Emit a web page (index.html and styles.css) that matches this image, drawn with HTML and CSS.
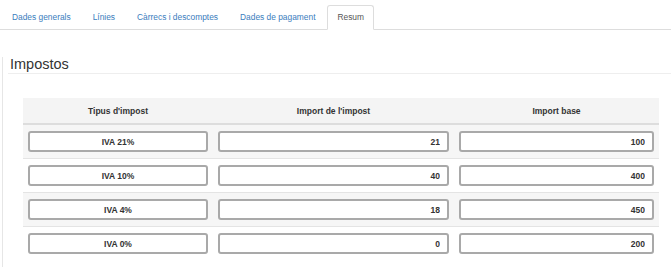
FILE: index.html
```html
<!DOCTYPE html>
<html lang="ca">

<head>
  <meta charset="UTF-8">
  <meta name="viewport" content="width=device-width, initial-scale=1.0">

  <title>Factura - Resum</title>
  <link rel="stylesheet" href="styles.css">
</head>

<body>
  <ul class="tabs">
    <li><a href="#">Dades generals</a></li>
    <li><a href="#">Línies</a></li>
    <li><a href="#">Càrrecs i descomptes</a></li>
    <li><a href="#">Dades de pagament</a></li>
    <li class="active"><a href="#">Resum</a></li>
  </ul>

  <div class="panel">
    <h3 class="section-title">Impostos</h3>

    <table class="taxes">
      <thead>
        <tr>
          <th class="col-type">Tipus d'impost</th>
          <th class="col-amount">Import de l'impost</th>
          <th class="col-base">Import base</th>
        </tr>
      </thead>
      <tbody>
        <tr>
          <td><input class="field center" value="IVA 21%" readonly></td>
          <td><input class="field right" value="21" readonly></td>
          <td><input class="field right" value="100" readonly></td>
        </tr>
        <tr>
          <td><input class="field center" value="IVA 10%" readonly></td>
          <td><input class="field right" value="40" readonly></td>
          <td><input class="field right" value="400" readonly></td>
        </tr>
        <tr>
          <td><input class="field center" value="IVA 4%" readonly></td>
          <td><input class="field right" value="18" readonly></td>
          <td><input class="field right" value="450" readonly></td>
        </tr>
        <tr>
          <td><input class="field center" value="IVA 0%" readonly></td>
          <td><input class="field right" value="0" readonly></td>
          <td><input class="field right" value="200" readonly></td>
        </tr>
      </tbody>
    </table>
  </div>
</body>

</html>
```

FILE: styles.css
```css
body {
  margin: 0;
  font-family: "Liberation Sans", Arial, sans-serif;
  color: #333;
  background: #fff;
}

/* tabs */
.tabs {
  display: flex;
  list-style: none;
  margin: 5px 0 0;
  padding: 0 0 0 2px;
  border-bottom: 1px solid #ddd;
}

.tabs li {
  margin-right: 2px;
  margin-bottom: -1px;
}

.tabs a {
  display: block;
  padding: 6px 9px;
  font-size: 8.4px;
  line-height: 11px;
  color: #3a7dbd;
  text-decoration: none;
  border: 1px solid transparent;
  border-radius: 3px 3px 0 0;
}

.tabs .active a {
  color: #555;
  background: #fff;
  border-color: #ddd;
  border-bottom-color: #fff;
}

/* panel */
.panel {
  margin-left: 2px;
  padding: 0 0 8px 5px;
  border-left: 1px solid #e6e6e6;
}

.section-title {
  margin: 27px 0 0;
  padding: 0 0 1px 2px;
  font-size: 14.5px;
  font-weight: normal;
  line-height: 15px;
  border-bottom: 1px solid #eee;
}

/* taxes table */
.taxes {
  width: 636px;
  margin: 24px 0 0 15px;
  border-collapse: collapse;
  table-layout: fixed;
}

.col-type {
  width: 190px;
}

.col-amount {
  width: 241px;
}

.col-base {
  width: 205px;
}

.taxes th {
  height: 25px;
  padding: 0;
  font-size: 8.5px;
  font-weight: bold;
  text-align: center;
  background: #f4f4f4;
  border-bottom: 2px solid #ddd;
}

.taxes td {
  padding: 6px 5px;
  border-top: 1px solid #e4e4e4;
}

.taxes tbody tr:first-child td {
  border-top: none;
}

.taxes tbody tr:nth-child(odd) {
  background: #f6f6f6;
}

.field {
  display: block;
  box-sizing: border-box;
  width: 100%;
  height: 21px;
  margin: 0;
  padding: 0 7px;
  font-family: "Liberation Sans", Arial, sans-serif;
  font-size: 8.5px;
  font-weight: bold;
  color: #333;
  background: #fff;
  border: 2px solid #a9a9a9;
  border-radius: 3px;
  outline: none;
}

.field.center {
  text-align: center;
}

.field.right {
  text-align: right;
}
```
